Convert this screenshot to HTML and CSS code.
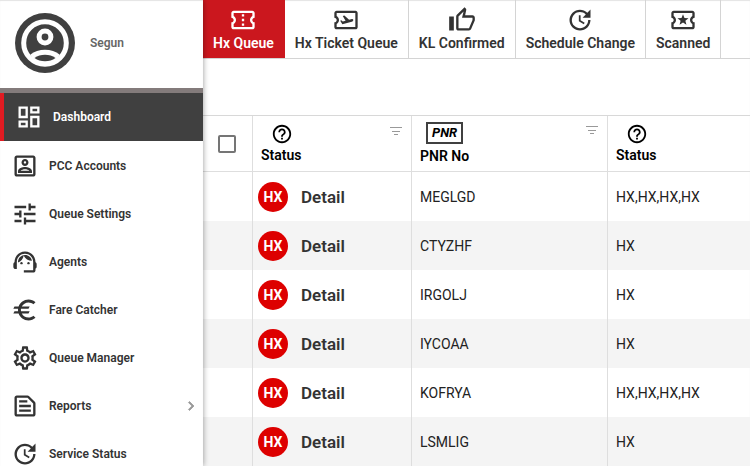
FILE: index.html
```html
<!DOCTYPE html>
<html lang="en">
<head>
    <meta charset="utf-8">
    <title>Hx Queue - Dashboard</title>
    <link rel="stylesheet" href="styles.css">
</head>
<body>
    <svg class="sprite" aria-hidden="true">
        <symbol id="i-update" viewBox="0 0 24 24"><path d="M21 10.12h-6.78l2.74-2.82c-2.73-2.7-7.15-2.8-9.88-.1-2.73 2.71-2.73 7.08 0 9.79s7.15 2.71 9.88 0C18.32 15.65 19 14.08 19 12.1h2c0 1.98-.88 4.55-2.64 6.29-3.51 3.48-9.21 3.48-12.72 0-3.5-3.47-3.53-9.11-.02-12.58s9.14-3.47 12.65 0L21 3v7.12zM12.5 8v4.25l3.5 2.08-.72 1.21L11 13V8h1.5z"/></symbol>
        <symbol id="i-help" viewBox="0 0 24 24"><path d="M11 18h2v-2h-2v2zm1-16C6.48 2 2 6.48 2 12s4.48 10 10 10 10-4.48 10-10S17.52 2 12 2zm0 18c-4.41 0-8-3.59-8-8s3.59-8 8-8 8 3.59 8 8-3.59 8-8 8zm0-14c-2.21 0-4 1.79-4 4h2c0-1.1.9-2 2-2s2 .9 2 2c0 2-3 1.75-3 5h2c0-2.25 3-2.5 3-5 0-2.21-1.79-4-4-4z"/></symbol>
        <symbol id="i-filter" viewBox="0 0 12 9"><path d="M0 0h12v1H0zM2 4h8v1H2zM4 7h4v1H4z"/></symbol>
    </svg>

    <div class="app">
        <aside class="sidebar">
            <div class="profile">
                <svg class="avatar" viewBox="0 0 60 60">
                    <circle cx="30" cy="30" r="30" fill="#404040"/>
                    <circle cx="30" cy="30" r="21.3" fill="none" stroke="#fff" stroke-width="5"/>
                    <circle cx="30" cy="24" r="5.9" fill="none" stroke="#fff" stroke-width="5"/>
                    <path fill="#fff" d="M15.5 41.5C19 38.5 24.5 36.7 30 36.7s11 1.8 14.5 4.8L42 47l-12 4-12-4z"/>
                    <path fill="#404040" d="M19.5 45c3-2.2 6.5-3.3 10.5-3.3S37.5 42.8 40.5 45c-3 2.2-6.5 3.3-10.5 3.3S22.5 47.2 19.5 45z"/>
                </svg>
                <span class="username">Segun</span>
            </div>

            <nav>
                <a href="#" class="nav-item active">
                    <svg class="icon" viewBox="0 0 24 24"><path d="M19 5v2h-4V5h4M9 5v6H5V5h4m10 8v6h-4v-6h4M9 17v2H5v-2h4M21 3h-8v6h8V3zM11 3H3v10h8V3zm10 8h-8v10h8V11zm-10 4H3v6h8v-6z"/></svg>
                    <span>Dashboard</span>
                </a>
                <div class="nav-list">
                    <a href="#" class="nav-item">
                        <svg class="icon" viewBox="0 0 24 24"><path d="M19 5v14H5V5h14m0-2H5c-1.11 0-2 .9-2 2v14c0 1.1.89 2 2 2h14c1.1 0 2-.9 2-2V5c0-1.1-.9-2-2-2zm-7 9c-1.65 0-3-1.35-3-3s1.35-3 3-3 3 1.35 3 3-1.35 3-3 3zm0-4c-.55 0-1 .45-1 1s.45 1 1 1 1-.45 1-1-.45-1-1-1zm6 10H6v-1.53c0-2.5 3.97-3.58 6-3.58s6 1.08 6 3.58V18zm-9.69-2h7.38c-.69-.56-2.38-1.12-3.69-1.12s-3.01.56-3.69 1.12z"/></svg>
                        <span>PCC Accounts</span>
                    </a>
                    <a href="#" class="nav-item">
                        <svg class="icon" viewBox="0 0 24 24"><path d="M3 17v2h6v-2H3zM3 5v2h10V5H3zm10 16v-2h8v-2h-8v-2h-2v6h2zM7 9v2H3v2h4v2h2V9H7zm14 4v-2H11v2h10zm-6-4h2V7h4V5h-4V3h-2v6z"/></svg>
                        <span>Queue Settings</span>
                    </a>
                    <a href="#" class="nav-item">
                        <svg class="icon" viewBox="0 0 24 24"><path d="M21 12.22C21 6.73 16.74 3 12 3c-4.69 0-9 3.65-9 9.28-.6.34-1 .98-1 1.72v2c0 1.1.9 2 2 2h1v-6.1c0-3.87 3.13-7 7-7s7 3.13 7 7V19h-8v2h8c1.1 0 2-.9 2-2v-1.22c.59-.31 1-.92 1-1.64v-2.3c0-.7-.41-1.31-1-1.62z"/><circle cx="9" cy="13" r="1"/><circle cx="15" cy="13" r="1"/><path d="M18 11.03C17.52 8.18 15.04 6 12.05 6c-3.03 0-6.29 2.51-6.03 6.45 2.47-1.01 4.33-3.21 4.86-5.89 1.31 2.63 4 4.44 7.12 4.47z"/></svg>
                        <span>Agents</span>
                    </a>
                    <a href="#" class="nav-item">
                        <svg class="icon" viewBox="0 0 24 24"><path d="M15 18.5c-2.51 0-4.68-1.42-5.76-3.5H15l1-2H8.58c-.05-.33-.08-.66-.08-1s.03-.67.08-1H15l1-2H9.24C10.32 6.92 12.5 5.5 15 5.5c1.61 0 3.09.59 4.23 1.57L21 5.3C19.41 3.87 17.3 3 15 3c-3.92 0-7.24 2.51-8.48 6H3l-1 2h4.06c-.04.33-.06.66-.06 1s.02.67.06 1H3l-1 2h4.52c1.24 3.49 4.56 6 8.48 6 2.31 0 4.41-.87 6-2.3l-1.78-1.77c-1.13.98-2.6 1.57-4.22 1.57z"/></svg>
                        <span>Fare Catcher</span>
                    </a>
                    <a href="#" class="nav-item">
                        <svg class="icon" viewBox="0 0 24 24"><path d="M19.43 12.98c.04-.32.07-.64.07-.98 0-.34-.03-.66-.07-.98l2.11-1.65c.19-.15.24-.42.12-.64l-2-3.46c-.09-.16-.26-.25-.44-.25-.06 0-.12.01-.17.03l-2.49 1c-.52-.4-1.08-.73-1.69-.98l-.38-2.65C14.46 2.18 14.25 2 14 2h-4c-.25 0-.46.18-.49.42l-.38 2.65c-.61.25-1.17.59-1.69.98l-2.49-1c-.06-.02-.12-.03-.18-.03-.17 0-.34.09-.43.25l-2 3.46c-.13.22-.07.49.12.64l2.11 1.65c-.04.32-.07.65-.07.98 0 .33.03.66.07.98l-2.11 1.65c-.19.15-.24.42-.12.64l2 3.46c.09.16.26.25.44.25.06 0 .12-.01.17-.03l2.49-1c.52.4 1.08.73 1.69.98l.38 2.65c.03.24.24.42.49.42h4c.25 0 .46-.18.49-.42l.38-2.65c.61-.25 1.17-.59 1.69-.98l2.49 1c.06.02.12.03.18.03.17 0 .34-.09.43-.25l2-3.46c.12-.22.07-.49-.12-.64l-2.11-1.65zm-1.98-1.71c.04.31.05.52.05.73 0 .21-.02.43-.05.73l-.14 1.13.89.7 1.08.84-.7 1.21-1.27-.51-1.04-.42-.9.68c-.43.32-.84.56-1.25.73l-1.06.43-.16 1.13-.2 1.35h-1.4l-.19-1.35-.16-1.13-1.06-.43c-.43-.18-.83-.41-1.23-.71l-.91-.7-1.06.43-1.27.51-.7-1.21 1.08-.84.89-.7-.14-1.13c-.03-.31-.05-.54-.05-.74s.02-.43.05-.73l.14-1.13-.89-.7-1.08-.84.7-1.21 1.27.51 1.04.42.9-.68c.43-.32.84-.56 1.25-.73l1.06-.43.16-1.13.2-1.35h1.39l.19 1.35.16 1.13 1.06.43c.43.18.83.41 1.23.71l.91.7 1.06-.43 1.27-.51.7 1.21-1.07.85-.89.7.14 1.13zM12 8c-2.21 0-4 1.79-4 4s1.79 4 4 4 4-1.79 4-4-1.79-4-4-4zm0 6c-1.1 0-2-.9-2-2s.9-2 2-2 2 .9 2 2-.9 2-2 2z"/></svg>
                        <span>Queue Manager</span>
                    </a>
                    <a href="#" class="nav-item">
                        <svg class="icon" viewBox="0 0 24 24"><path d="M14.17 5L19 9.83V19H5V5h9.17m0-2H5c-1.1 0-2 .9-2 2v14c0 1.1.9 2 2 2h14c1.1 0 2-.9 2-2V9.83c0-.53-.21-1.04-.59-1.41l-4.83-4.83c-.37-.38-.88-.59-1.41-.59zM7 15h10v2H7v-2zm0-4h10v2H7v-2zm0-4h7v2H7V7z"/></svg>
                        <span>Reports</span>
                        <svg class="chevron" viewBox="0 0 24 24"><path d="M10 6L8.59 7.41 13.17 12l-4.58 4.59L10 18l6-6z"/></svg>
                    </a>
                    <a href="#" class="nav-item">
                        <svg class="icon"><use href="#i-update"/></svg>
                        <span>Service Status</span>
                    </a>
                </div>
            </nav>
        </aside>

        <main class="content">
            <div class="tabs">
                <button class="tab active">
                    <svg class="icon" viewBox="0 0 24 24"><path d="M22 10V6c0-1.11-.9-2-2-2H4c-1.1 0-1.99.89-1.99 2v4c1.1 0 1.99.9 1.99 2s-.89 2-2 2v4c0 1.1.9 2 2 2h16c1.1 0 2-.9 2-2v-4c-1.1 0-2-.9-2-2s.9-2 2-2zm-2-1.46c-1.19.69-2 1.99-2 3.46s.81 2.77 2 3.46V18H4v-2.54c1.19-.69 2-1.99 2-3.46 0-1.48-.8-2.77-1.99-3.46L4 6h16v2.54zM11 15h2v2h-2zm0-4h2v2h-2zm0-4h2v2h-2z"/></svg>
                    Hx Queue
                </button>
                <button class="tab">
                    <svg class="icon" viewBox="0 0 24 24"><path d="M20.19 4H4c-1.1 0-1.99.9-1.99 2v4c1.1 0 1.99.9 1.99 2s-.89 2-2 2v4c0 1.1.9 2 2 2h16.19c1 0 1.81-.9 1.81-2V6c0-1.1-.81-2-1.81-2zM20 18H4v-2.54c1.19-.69 2-1.99 2-3.46 0-1.48-.8-2.77-1.99-3.46L4 6h16v12z"/><path d="M17.73 13.3L8.86 15.7l-1.82-3.16.93-.25 1.26.99 2.39-.64-2.4-4.16 1.4-.38 4.01 3.74 2.44-.65c.51-.14 1.04.17 1.18.68.13.51-.17 1.04-.69 1.19z"/></svg>
                    Hx Ticket Queue
                </button>
                <button class="tab">
                    <svg class="icon" viewBox="0 0 24 24"><path d="M9 21h9c.83 0 1.54-.5 1.84-1.22l3.02-7.05c.09-.23.14-.47.14-.73v-2c0-1.1-.9-2-2-2h-6.31l.95-4.57.03-.32c0-.41-.17-.79-.44-1.06L14.17 1 7.58 7.59C7.22 7.95 7 8.45 7 9v10c0 1.1.9 2 2 2zM9 9l4.34-4.34L12 10h9v2l-3 7H9V9zM1 9h4v12H1z"/></svg>
                    KL Confirmed
                </button>
                <button class="tab">
                    <svg class="icon"><use href="#i-update"/></svg>
                    Schedule Change
                </button>
                <button class="tab">
                    <svg class="icon" viewBox="0 0 24 24"><path d="M22 10V6c0-1.11-.9-2-2-2H4c-1.1 0-1.99.89-1.99 2v4c1.1 0 1.99.9 1.99 2s-.89 2-2 2v4c0 1.1.9 2 2 2h16c1.1 0 2-.9 2-2v-4c-1.1 0-2-.9-2-2s.9-2 2-2zm-2-1.46c-1.19.69-2 1.99-2 3.46s.81 2.77 2 3.46V18H4v-2.54c1.19-.69 2-1.99 2-3.46 0-1.48-.8-2.77-1.99-3.46L4 6h16v2.54zM9.07 16L12 14.12 14.93 16l-.89-3.36 2.69-2.2-3.47-.21L12 7l-1.27 3.22-3.47.21 2.69 2.2z"/></svg>
                    Scanned
                </button>
            </div>

            <table class="queue">
                <thead>
                    <tr>
                        <th class="col-check"><input type="checkbox" aria-label="Select all"></th>
                        <th class="col-detail">
                            <div class="head">
                                <div class="head-label"><svg class="help"><use href="#i-help"/></svg>Status</div>
                                <svg class="filter"><use href="#i-filter"/></svg>
                            </div>
                        </th>
                        <th class="col-pnr">
                            <div class="head">
                                <div class="head-label"><span class="pnr-tag">PNR</span>PNR No</div>
                                <svg class="filter"><use href="#i-filter"/></svg>
                            </div>
                        </th>
                        <th>
                            <div class="head">
                                <div class="head-label"><svg class="help"><use href="#i-help"/></svg>Status</div>
                            </div>
                        </th>
                    </tr>
                </thead>
                <tbody>
                    <tr>
                        <td></td>
                        <td><a href="#" class="detail"><span class="badge">HX</span>Detail</a></td>
                        <td>MEGLGD</td>
                        <td>HX,HX,HX,HX</td>
                    </tr>
                    <tr>
                        <td></td>
                        <td><a href="#" class="detail"><span class="badge">HX</span>Detail</a></td>
                        <td>CTYZHF</td>
                        <td>HX</td>
                    </tr>
                    <tr>
                        <td></td>
                        <td><a href="#" class="detail"><span class="badge">HX</span>Detail</a></td>
                        <td>IRGOLJ</td>
                        <td>HX</td>
                    </tr>
                    <tr>
                        <td></td>
                        <td><a href="#" class="detail"><span class="badge">HX</span>Detail</a></td>
                        <td>IYCOAA</td>
                        <td>HX</td>
                    </tr>
                    <tr>
                        <td></td>
                        <td><a href="#" class="detail"><span class="badge">HX</span>Detail</a></td>
                        <td>KOFRYA</td>
                        <td>HX,HX,HX,HX</td>
                    </tr>
                    <tr>
                        <td></td>
                        <td><a href="#" class="detail"><span class="badge">HX</span>Detail</a></td>
                        <td>LSMLIG</td>
                        <td>HX</td>
                    </tr>
                </tbody>
            </table>
        </main>
    </div>
</body>
</html>
```
FILE: styles.css
```css
* { box-sizing: border-box; }
body { margin: 0; font-family: Roboto, "Liberation Sans", sans-serif; font-size: 14px; color: #333; background: #fff; }
a { color: inherit; text-decoration: none; }
svg { fill: currentColor; flex: none; }
.sprite { display: none; }
.icon { width: 28px; height: 28px; }

.app { display: flex; height: 100vh; overflow: hidden; box-shadow: inset 0 1px 1px #e4e4e4; }

/* sidebar */
.sidebar { position: relative; z-index: 1; flex: none; width: 203px; background: #fff; box-shadow: 0 0 6px rgba(0, 0, 0, .4), inset 0 1px 1px #e4e4e4; }
.profile { display: flex; align-items: center; gap: 15px; height: 93px; padding: 0 15px 2px; border-bottom: 5px solid #837b7b; }
.avatar { width: 60px; height: 60px; }
.username { font-size: 12px; font-weight: 600; color: #666; }
.nav-list { padding-top: 1px; }
.nav-item { display: flex; align-items: center; gap: 10px; height: 48px; padding: 0 3px 0 11px; font-size: 12px; font-weight: 600; }
.nav-item.active { background: #404040; color: #fff; border-left: 4px solid #e01b22; }
.chevron { width: 18px; height: 18px; margin-left: auto; color: #999; stroke: #999; }

/* top tabs */
.content { flex: 1; min-width: 0; }
.tabs { display: flex; border-bottom: 1px solid #d4d4d4; }
.tab { display: flex; flex-direction: column; align-items: center; padding: 6px 10px; border: 0; border-right: 1px solid #d4d4d4; background: none; color: #333; font: 600 14px/18px Roboto, "Liberation Sans", sans-serif; white-space: nowrap; cursor: pointer; }
.tab.active { background: #cb171e; color: #fff; border-right-color: #cb171e; }

/* queue table */
.queue { width: 100%; margin-top: 56px; border-top: 1px solid #d8d8d8; border-collapse: separate; border-spacing: 0; table-layout: fixed; }
.col-check { width: 50px; }
.col-detail { width: 159px; }
.col-pnr { width: 196px; }
.queue th, .queue td { border-right: 1px solid #dedede; }
.queue th:last-child, .queue td:last-child { border-right: 0; }
.queue th { height: 56px; padding: 0; border-bottom: 1px solid #dedede; color: #000; text-align: left; }
.queue td { height: 49px; padding: 0 8px; color: #222; }
.queue tbody tr:nth-child(even) { background: #f4f4f4; }
.queue th input { appearance: none; display: block; width: 18px; height: 18px; margin: 0 15px; border: 2px solid #757575; border-radius: 2px; background: #fff; }
.head { display: flex; justify-content: space-between; align-items: flex-start; padding: 0 9px 0 8px; }
.head-label { display: flex; flex-direction: column; align-items: flex-start; font-weight: 600; line-height: 20px; }
.help { width: 22px; height: 22px; margin-left: 10px; }
.pnr-tag { margin: 0 6px 2px; padding: 0 4px; border: 2px solid #404040; font-size: 13px; font-weight: 700; font-style: italic; line-height: 18px; }
.filter { width: 12px; height: 9px; margin-top: 4px; color: #999; }
.detail { display: flex; align-items: center; gap: 13px; margin-left: -3px; font-size: 17px; font-weight: 600; color: #333; }
.badge { width: 30px; height: 30px; border-radius: 50%; background: #d00; color: #fff; font-size: 14px; font-weight: 700; line-height: 30px; text-align: center; }
```
